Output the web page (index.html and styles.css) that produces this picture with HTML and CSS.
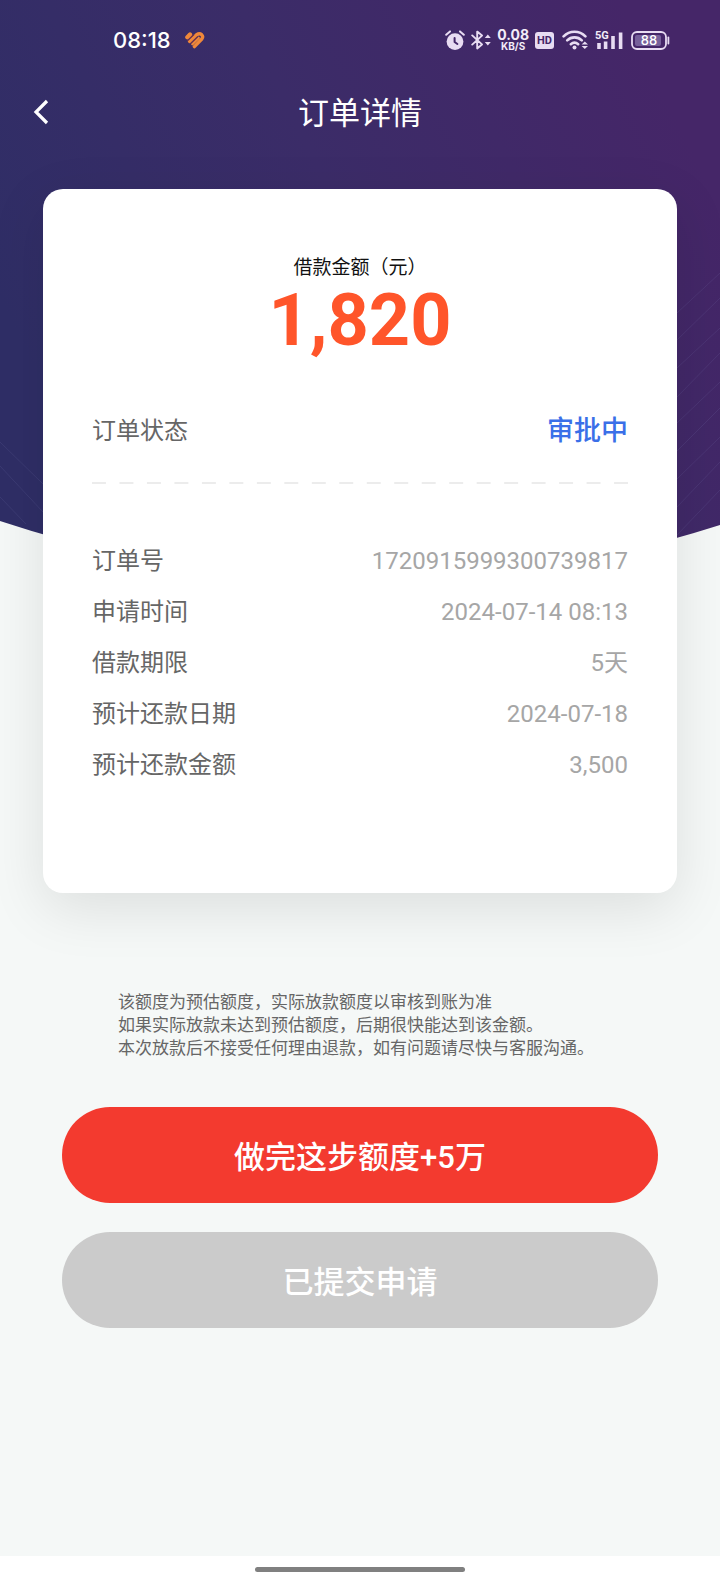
FILE: index.html
```html
<!DOCTYPE html>
<html lang="zh-CN">
<head>
<meta charset="utf-8">
<meta name="viewport" content="width=device-width, initial-scale=1">
<title>订单详情</title>
<link rel="stylesheet" href="styles.css">
</head>
<body>
<div class="page">
  <svg class="backdrop" viewBox="0 0 720 600" preserveAspectRatio="none" aria-hidden="true">
    <defs>
      <linearGradient id="sky" gradientUnits="userSpaceOnUse" x1="0" y1="300" x2="620" y2="0">
        <stop offset="0" stop-color="#2f2e66"/>
        <stop offset="0.5" stop-color="#3b2c68"/>
        <stop offset="1" stop-color="#452668"/>
      </linearGradient>
    </defs>
    <path fill="url(#sky)" d="M0 0H720V525Q360 640 0 521Z"/>
    <g fill="none" stroke="#8a84c0" stroke-opacity="0.14" stroke-width="1">
      <path d="M0 442L43 484M0 466L43 512M0 497L26 524"/>
      <path d="M677 313L720 273M677 340L720 298M677 368L720 328M677 397L720 353M677 423L720 382M677 451L720 408M677 479L720 437M677 507L720 462M677 535L720 490"/>
    </g>
  </svg>

  <div class="status-bar">
    <div class="status-left">
      <span class="clock">08:18</span>
      <svg width="20" height="17" viewBox="0 0 20 17" aria-hidden="true">
        <g fill="none" stroke="#f0883a" stroke-linecap="round" stroke-linejoin="round">
          <path d="M2.4 5.2L5 2.6" stroke-width="4.4"/>
          <path d="M4.6 9.4L11.6 2.8Q14.4 1 16.6 2.6Q18.6 4.6 16.8 7L9.4 14.6" stroke-width="3.4"/>
          <path d="M7.4 12L13.6 6" stroke-width="2.6"/>
        </g>
        <path d="M2.6 8.6L8.6 2.8M6 11.2L12.4 5" stroke="#6a3050" stroke-width="1.2" stroke-linecap="round" fill="none"/>
      </svg>
    </div>
    <div class="status-right">
      <svg width="20" height="21" viewBox="0 0 20 21" aria-hidden="true">
        <circle cx="10" cy="11.6" r="8.4" fill="#e8dcf2"/>
        <path d="M1.2 4.8L5 1.4M18.8 4.8L15 1.4" stroke="#e8dcf2" stroke-width="2" stroke-linecap="round"/>
        <path d="M9.6 8V12L12.4 14" fill="none" stroke="#442668" stroke-width="2" stroke-linecap="round" stroke-linejoin="round"/>
      </svg>
      <svg width="20" height="20" viewBox="0 0 20 20" aria-hidden="true">
        <path d="M1.2 5.4L11 14.4L6.2 18.4V1.6L11 5.6L1.2 14.6" fill="none" stroke="#e8dcf2" stroke-width="1.9" stroke-linecap="round" stroke-linejoin="round"/>
        <path d="M13.8 8L16.8 4.6L19.8 8ZM13.8 12L16.8 15.4L19.8 12Z" fill="#e8dcf2"/>
      </svg>
      <span class="speed"><span class="speed-value">0.08</span><span class="speed-unit">KB/S</span></span>
      <span class="hd">HD</span>
      <svg class="wifi" width="27" height="20" viewBox="0 0 27 20" aria-hidden="true">
        <g fill="none" stroke="#e8dcf2" stroke-width="2.6" stroke-linecap="round">
          <path d="M1.6 6.4C7.6 0.2 17.4 0.2 23.4 6.4"/>
          <path d="M5.2 10.4C9.2 6.4 15.8 6.4 19.8 10.4"/>
          <path d="M8.8 14.2C11 12.2 14 12.2 16.2 14.2"/>
        </g>
        <circle cx="12.5" cy="17.6" r="2" fill="#e8dcf2"/>
        <path d="M19.6 14.4L22.8 11.4L26 14.4ZM19.6 16L22.8 19L26 16Z" fill="#e8dcf2"/>
      </svg>
      <svg width="28" height="28" viewBox="0 -4 28 28" aria-hidden="true">
        <text class="net-label" x="0" y="9">5G</text>
        <path d="M4 13V19M10.6 11.4V19M18 6V19M25.6 2.4V19" stroke="#e8dcf2" stroke-width="3.6" fill="none"/>
      </svg>
      <svg class="battery" width="39" height="19" viewBox="0 0 39 19" aria-hidden="true">
        <rect x="1" y="1" width="34" height="17" rx="5" fill="none" stroke="#e8dcf2" stroke-width="1.8"/>
        <rect x="4" y="4" width="26" height="11" rx="2" fill="#77609a"/>
        <path d="M37.4 6.4V12.6" stroke="#e8dcf2" stroke-width="1.8" stroke-linecap="round"/>
        <text class="battery-label" x="18" y="14" text-anchor="middle">88</text>
      </svg>
    </div>
  </div>

  <header class="nav">
    <button class="back" type="button" aria-label="返回">
      <svg width="16" height="26" viewBox="0 0 16 26" aria-hidden="true">
        <path d="M14 2L3 13L14 24" fill="none" stroke="#fff" stroke-width="3.2"/>
      </svg>
    </button>
    <h1 class="title">订单详情</h1>
  </header>

  <main class="content">
    <section class="card">
      <p class="amount-label">借款金额（元）</p>
      <p class="amount">1,820</p>
      <div class="state">
        <span class="state-label">订单状态</span>
        <strong class="state-value">审批中</strong>
      </div>
      <svg class="divider" viewBox="0 0 538 2" preserveAspectRatio="none" aria-hidden="true">
        <path d="M0 1H538" stroke="#ececec" stroke-width="2" stroke-dasharray="14 13.58"/>
      </svg>
      <dl class="details">
        <div class="row"><dt>订单号</dt><dd>1720915999300739817</dd></div>
        <div class="row"><dt>申请时间</dt><dd>2024-07-14 08:13</dd></div>
        <div class="row"><dt>借款期限</dt><dd>5天</dd></div>
        <div class="row"><dt>预计还款日期</dt><dd>2024-07-18</dd></div>
        <div class="row"><dt>预计还款金额</dt><dd>3,500</dd></div>
      </dl>
    </section>

    <p class="notes">该额度为预估额度，实际放款额度以审核到账为准<br>如果实际放款未达到预估额度，后期很快能达到该金额。<br>本次放款后不接受任何理由退款，如有问题请尽快与客服沟通。</p>

    <div class="actions">
      <button class="action action-primary" type="button">做完这步额度+5万</button>
      <button class="action action-done" type="button" disabled>已提交申请</button>
    </div>
  </main>

  <footer class="gesture"><span class="gesture-pill"></span></footer>
</div>
</body>
</html>
```

FILE: styles.css
```css
* {
  box-sizing: border-box;
}

body {
  margin: 0;
  background: #f5f8f7;
  font-family: Roboto, "Noto Sans CJK SC", sans-serif;
}

h1, p, dl, dd {
  margin: 0;
}

button {
  border: 0;
  font-family: inherit;
}

.page {
  position: relative;
  display: flex;
  flex-direction: column;
  min-height: 100vh;
}

.backdrop {
  position: absolute;
  top: 0;
  left: 0;
  z-index: -1;
  width: 100%;
  height: 600px;
}

.status-bar {
  display: flex;
  justify-content: space-between;
  align-items: center;
  height: 80px;
  padding: 0 50px 0 113px;
  color: #fff;
}

.status-left {
  display: flex;
  align-items: center;
  gap: 14px;
}

.clock {
  font: 500 22px/24px Inter, sans-serif;
}

.status-right {
  display: flex;
  align-items: center;
  gap: 6px;
}

.speed {
  display: flex;
  flex-direction: column;
  align-items: center;
  color: #f3ecf8;
  font-family: Inter, sans-serif;
  font-weight: 700;
}

.speed-value {
  font-size: 14px;
  line-height: 13px;
}

.speed-unit {
  font-size: 10px;
  line-height: 11px;
}

.hd {
  padding: 0 2px;
  border-radius: 3px;
  background: #e8dcf2;
  color: #442668;
  font: 700 11px/17px Roboto, sans-serif;
}

.wifi {
  margin-left: 2px;
}

.net-label {
  fill: #f3ecf8;
  font: 700 11px Roboto, sans-serif;
}

.battery {
  margin-left: 2px;
}

.battery-label {
  fill: #fff;
  font: 500 13px Inter, sans-serif;
}

.nav {
  display: grid;
  grid-template-columns: 80px 1fr 80px;
  align-items: center;
  height: 64px;
}

.back {
  display: flex;
  align-items: center;
  height: 64px;
  padding: 0 0 0 33px;
  background: none;
}

.title {
  padding-top: 4px;
  color: #fff;
  font-size: 31px;
  font-weight: 400;
  line-height: 60px;
  text-align: center;
}

.content {
  flex: 1;
  padding: 45px 43px 64px;
}

.card {
  padding: 67px 49px 102px;
  border-radius: 20px;
  background: #fff;
  box-shadow: 0 16px 56px rgba(0, 0, 0, 0.1);
}

.amount-label {
  color: #111;
  font-size: 19px;
  line-height: 24px;
  text-align: center;
}

.amount {
  color: #ff552a;
  font-size: 72px;
  font-weight: 700;
  line-height: 82px;
  text-align: center;
}

.state {
  display: flex;
  justify-content: space-between;
  align-items: center;
  margin-top: 49px;
  line-height: 40px;
}

.state-label {
  color: #666;
  font-size: 24px;
}

.state-value {
  color: #3a6fe8;
  font-size: 27px;
  font-weight: 500;
}

.divider {
  display: block;
  width: 100%;
  height: 2px;
  margin: 31px 0 52px;
}

.row {
  display: flex;
  justify-content: space-between;
  font-size: 24px;
  line-height: 51px;
}

.row dt {
  color: #666;
}

.row dd {
  color: #a6a6a6;
}

.notes {
  margin-top: 98px;
  padding-left: 75px;
  color: #666;
  font-size: 17px;
  line-height: 23px;
}

.actions {
  display: flex;
  flex-direction: column;
  gap: 29px;
  margin-top: 47px;
  padding: 0 19px;
}

.action {
  height: 96px;
  padding-bottom: 2px;
  border-radius: 48px;
  color: #fff;
  font-size: 31px;
  font-weight: 500;
}

.action-primary {
  background: #f33a2f;
}

.action-done {
  background: #cbcbcb;
}

.gesture {
  display: flex;
  justify-content: center;
  align-items: flex-start;
  height: 28px;
  padding-top: 11px;
  background: #fff;
}

.gesture-pill {
  width: 210px;
  height: 5px;
  border-radius: 3px;
  background: #808080;
}
```
